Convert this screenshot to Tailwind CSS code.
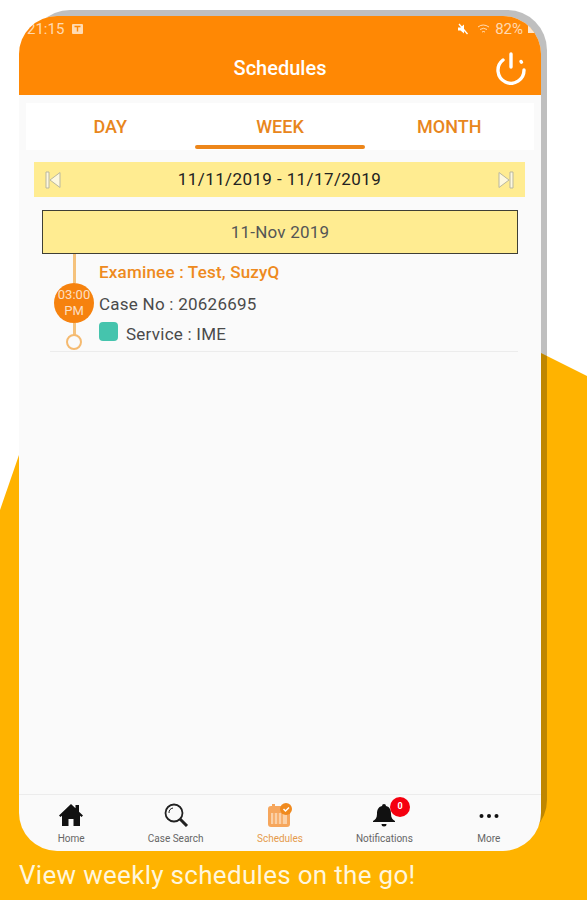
<!DOCTYPE html>
<html lang="en">
<head>
    <meta charset="UTF-8">
    <meta name="viewport" content="width=device-width, initial-scale=1.0">
    <title>Schedules</title>
    <script src="https://cdn.jsdelivr.net/npm/@tailwindcss/browser@4"></script>
</head>
<body class="bg-white">
<div class="relative w-[587px] h-[900px] overflow-hidden font-['Roboto',sans-serif] pt-[16px] pl-[19px]">
    <!-- Backdrop -->
    <svg class="absolute left-0 top-0" width="587" height="900" viewBox="0 0 587 900">
        <polygon points="0,510 19,455 541,353 587,376 587,900 0,900" fill="#ffb300"/>
    </svg>
    <div class="absolute left-[30px] top-[10px] w-[517px] h-[830px] rounded-[40px] bg-black/25"></div>

    <!-- Phone -->
    <div class="relative w-[522px] h-[835px] rounded-[38px] overflow-hidden bg-[#fafafa] flex flex-col">
        <!-- Header -->
        <div class="h-[79px] bg-[#ff8804] text-white shrink-0">
            <div class="flex justify-between items-center h-[26px] pl-[8px] pr-[7px] text-[15px] text-white/70">
                <div class="flex items-center gap-[7px]">
                    <span>21:15</span>
                    <svg width="13" height="12" viewBox="0 0 13 12"><rect x="1" y="1" width="11" height="10" rx="1" fill="#fff" fill-opacity=".7"/><path d="M3.500 3.500h6M6.500 3.500v5" stroke="#ff8804" stroke-width="1.400"/></svg>
                </div>
                <div class="flex items-center gap-[5px]">
                    <svg class="mr-[3px]" width="12" height="12" viewBox="0 0 12 12"><path d="M1 4.500h2.500L7 1.500v9L3.500 7.500H1z" fill="#fff"/><path d="M2 1l8.500 10" stroke="#fff" stroke-width="1.300"/></svg>
                    <svg width="13" height="12" viewBox="0 0 13 12" fill="none" stroke="#fff" stroke-opacity=".7"><path d="M1 4q5-4 11 0M3 6.500q3.500-2.500 7 0M5 9q1.500-1 3 0"/></svg>
                    <span>82%</span>
                    <span class="w-[6px] h-[8px] bg-white/80"></span>
                </div>
            </div>
            <div class="relative flex items-center justify-center h-[53px]">
                <span class="text-[20px] font-medium -mt-[1px]">Schedules</span>
                <svg class="absolute right-[14px] top-[9px]" width="32" height="34" viewBox="0 0 32 34" fill="none" stroke="#fff" stroke-width="3.400" stroke-linecap="round">
                    <path d="M16 3v13"/>
                    <path d="M8 9A13 13 0 1 0 29 19"/>
                    <path d="M26 10.500l.5.700"/>
                </svg>
            </div>
        </div>

        <!-- Tabs -->
        <div class="mt-[8px] mx-[7px] h-[47px] bg-white grid grid-cols-3 text-[18px] font-medium text-[#e8861c] shrink-0">
            <div class="flex items-center justify-center pr-[1px] pb-[1px]">DAY</div>
            <div class="relative flex items-center justify-center pb-[1px]">
                WEEK
                <span class="absolute left-[0px] right-[0px] bottom-[1px] h-[4px] rounded-full bg-[#ed861a]"></span>
            </div>
            <div class="flex items-center justify-center pb-[1px]">MONTH</div>
        </div>

        <!-- Date range -->
        <div class="mt-[12px] ml-[15px] mr-[16px] h-[35px] bg-[#ffec91] flex items-center justify-between px-[11px] shrink-0">
            <svg width="16" height="18" viewBox="0 0 16 18" fill="#fdf8e0" stroke="#b9b79f" stroke-width="1"><path d="M1 1h3v16H1z"/><path d="M15 1.500v15L5 9z"/></svg>
            <span class="text-[17px] text-[#222] tracking-[0.4px]">11/11/2019 - 11/17/2019</span>
            <svg width="16" height="18" viewBox="0 0 16 18" fill="#fdf8e0" stroke="#b9b79f" stroke-width="1"><path d="M15 1h-3v16h3z"/><path d="M1 1.500v15L11 9z"/></svg>
        </div>

        <!-- Day heading -->
        <div class="mt-[13px] mx-[23px] h-[44px] bg-[#ffec91] border border-[#3f3f35] flex items-center justify-center pt-[2px] text-[17px] text-[#555] shrink-0 tracking-[0.2px]">11-Nov 2019</div>

        <!-- Appointment -->
        <div class="mx-[31px] w-[468px] h-[98px] flex border-b border-[#ececec] shrink-0">
            <div class="relative w-[48px] shrink-0 flex flex-col items-center">
                <span class="w-[3px] h-[29px] bg-[#f5c27c]"></span>
                <div class="w-[40px] h-[40px] rounded-full bg-[#f6820e] text-white/75 text-[13px] leading-[16px] flex items-center justify-center text-center shrink-0">03:00<br>PM</div>
                <span class="w-[3px] h-[12px] bg-[#f5c27c]"></span>
                <span class="w-[16px] h-[16px] rounded-full border-[2.5px] border-[#f5ba70] bg-[#fafafa] -mt-[1px]"></span>
            </div>
            <div class="pl-[1px] pt-[7px] flex flex-col">
                <span class="text-[17px] leading-[22px] font-medium text-[#ee8a20] tracking-[0.2px]">Examinee : Test, SuzyQ</span>
                <span class="mt-[10px] text-[17px] leading-[22px] text-[#4a4a4a] tracking-[0.25px]">Case No : 20626695</span>
                <div class="mt-[7px] flex items-start">
                    <span class="w-[19px] h-[19px] rounded-[4px] bg-[#45c4ad]"></span>
                    <span class="ml-[8px] mt-[1px] text-[17px] leading-[22px] text-[#4a4a4a] tracking-[0.25px]">Service : IME</span>
                </div>
            </div>
        </div>

        <div class="flex-1"></div>

        <!-- Bottom nav -->
        <div class="h-[57px] border-t border-[#ececec] grid grid-cols-5 text-[10px] text-[#666] shrink-0">
            <div class="flex flex-col items-center">
                <svg class="mt-[8px]" width="26" height="24" viewBox="0 0 26 24" fill="#111"><path d="M13 1L1 12.500l1.500 1.500L4 12.700V23h6.500v-7h5v7H22V12.700l1.500 1.300 1.500-1.500-4-3.800V2h-3.500v3.200z"/></svg>
                <span class="mt-[4px]">Home</span>
            </div>
            <div class="flex flex-col items-center">
                <svg class="mt-[8px]" width="26" height="24" viewBox="0 0 26 24" fill="none" stroke="#222"><circle cx="11" cy="10" r="8.500" stroke-width="1.800"/><path d="M6 10a5 5 0 0 1 4-5" stroke-width="1"/><path d="M17 16l7 7" stroke-width="3"/></svg>
                <span class="mt-[4px]">Case Search</span>
            </div>
            <div class="flex flex-col items-center text-[#e59a4c]">
                <svg class="mt-[8px]" width="26" height="24" viewBox="0 0 26 24"><rect x="1" y="3" width="22" height="21" rx="3" fill="#f6a65c"/><rect x="4" y="10" width="16" height="11" fill="#fbd0a6"/><path d="M7 10v11M11 10v11M15 10v11" stroke="#f6a65c" stroke-width="1.500"/><rect x="5" y="1" width="3" height="5" fill="#f6a65c"/><circle cx="19" cy="6" r="6" fill="#f08a1e"/><path d="M16.500 6l2 2 3.500-3.500" stroke="#fff" stroke-width="1.500" fill="none"/></svg>
                <span class="mt-[4px]">Schedules</span>
            </div>
            <div class="relative flex flex-col items-center">
                <svg class="mt-[8px] -ml-[1px]" width="26" height="24" viewBox="0 0 26 24" fill="#111"><path d="M13 1a2 2 0 0 1 2 2c4 1 5 4 5 8 0 4 2 6 4 7v1H2v-1c2-1 4-3 4-7 0-4 1-7 5-8a2 2 0 0 1 2-2z"/><path d="M10.500 21h5a2.500 2.500 0 0 1-5 0z"/></svg>
                <span class="absolute left-[58px] top-[2px] w-[20px] h-[20px] rounded-full bg-[#f5000f] text-white text-[9px] font-bold flex items-center justify-center">0</span>
                <span class="mt-[4px]">Notifications</span>
            </div>
            <div class="flex flex-col items-center">
                <svg class="mt-[8px]" width="26" height="24" viewBox="0 0 26 24" fill="#111"><circle cx="5.500" cy="13" r="2"/><circle cx="13" cy="13" r="2"/><circle cx="20.500" cy="13" r="2"/></svg>
                <span class="mt-[4px]">More</span>
            </div>
        </div>
    </div>

    <!-- Caption -->
    <p class="relative mt-[8px] text-[26px] leading-[32px] text-[#fff6dc] tracking-[0.3px]">View weekly schedules on the go!</p>
</div>
</body>
</html>
